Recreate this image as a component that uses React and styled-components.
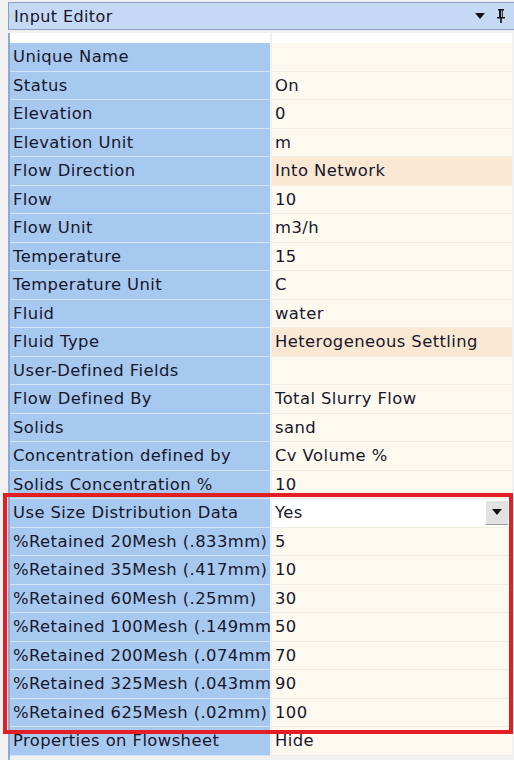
import React from "react";
import styled, { createGlobalStyle } from "styled-components";

const Global = createGlobalStyle`
  html, body { margin: 0; padding: 0; background: #f0f0f0; }
  body { font-family: "DejaVu Sans", Verdana, sans-serif; }
`;

const Page = styled.div`
  width: 514px;
  height: 760px;
  background: #f0f0f0;
  display: flex;
  flex-direction: column;
  position: relative;
  overflow: hidden;
`;

const TitleBar = styled.div`
  margin: 2px 0 0 8px;
  height: 28px;
  box-sizing: border-box;
  border: 1px solid #8c9fba;
  border-right: none;
  background: #c5d9f5;
  display: flex;
  align-items: center;
  padding: 0 8px 0 5px;
  font-size: 16px;
  letter-spacing: 0.4px;
  color: #15152a;
`;

const Title = styled.span`
  flex: 1;
`;

const TitleIcons = styled.div`
  display: flex;
  align-items: center;
  gap: 11px;
`;

const Grid = styled.div`
  margin: 3px 2px 0 8px;
  border-left: 2px solid #8eaad4;
  display: flex;
  flex-direction: column;
  flex: 1;
`;

const Row = styled.div`
  display: grid;
  grid-template-columns: 260px 2px 1fr;
  height: ${(p) => p.$h || "28.5px"};
  flex: none;
`;

const Label = styled.div`
  background: ${(p) => (p.$blank ? "#ffffff" : "#a8c9ef")};
  border-bottom: 1px solid ${(p) => (p.$blank ? "#ffffff" : "#d6e5f7")};
  box-sizing: border-box;
  padding-left: 3px;
  display: flex;
  align-items: center;
  font-size: 16.4px;
  letter-spacing: 0.42px;
  color: #17172c;
  white-space: nowrap;
  overflow: hidden;
`;

const Sep = styled.div`
  background: #eef1f6;
`;

const Value = styled.div`
  background: ${(p) =>
    p.$blank ? "#ffffff" : p.$hl ? "#fbe8d3" : p.$white ? "#ffffff" : "#fef9ef"};
  border-bottom: 1px solid ${(p) => (p.$blank ? "#ffffff" : "#f1ede4")};
  box-sizing: border-box;
  padding-left: 3px;
  display: flex;
  align-items: center;
  font-size: 16.4px;
  letter-spacing: 0.42px;
  color: #17172c;
  white-space: nowrap;
  overflow: hidden;
`;

const ValueText = styled.span`
  flex: 1;
`;

const DropButton = styled.div`
  width: 22px;
  height: 24px;
  margin-right: 4px;
  background: #e2e2e2;
  border-bottom: 1px solid #a0a0a0;
  box-sizing: border-box;
  display: flex;
  align-items: center;
  justify-content: center;
`;

const Highlight = styled.div`
  position: absolute;
  left: 3px;
  top: 493px;
  width: 510px;
  height: 241px;
  box-sizing: border-box;
  border: 4px solid #e31e24;
  pointer-events: none;
`;

const rows = [
  ["Unique Name", ""],
  ["Status", "On"],
  ["Elevation", "0"],
  ["Elevation Unit", "m"],
  ["Flow Direction", "Into Network", "hl"],
  ["Flow", "10"],
  ["Flow Unit", "m3/h"],
  ["Temperature", "15"],
  ["Temperature Unit", "C"],
  ["Fluid", "water"],
  ["Fluid Type", "Heterogeneous Settling", "hl"],
  ["User-Defined Fields", ""],
  ["Flow Defined By", "Total Slurry Flow"],
  ["Solids", "sand"],
  ["Concentration defined by", "Cv Volume %"],
  ["Solids Concentration %", "10"],
  ["Use Size Distribution Data", "Yes", "drop"],
  ["%Retained 20Mesh (.833mm)", "5"],
  ["%Retained 35Mesh (.417mm)", "10"],
  ["%Retained 60Mesh (.25mm)", "30"],
  ["%Retained 100Mesh (.149mm)", "50"],
  ["%Retained 200Mesh (.074mm)", "70"],
  ["%Retained 325Mesh (.043mm)", "90"],
  ["%Retained 625Mesh (.02mm)", "100"],
  ["Properties on Flowsheet", "Hide"],
];

const Caret = () => (
  <svg width="10" height="6" viewBox="0 0 10 6">
    <path d="M0 0H10L5 6Z" fill="#111" />
  </svg>
);

const Pin = () => (
  <svg width="10" height="14" viewBox="0 0 10 14">
    <path d="M2 0H8V1.5H7V8H9V9.5H5.8V14H4.2V9.5H1V8H3V1.5H2Z" fill="#111" />
    <rect x="5.2" y="1.5" width="1" height="6.5" fill="#c5d9f5" />
  </svg>
);

export default function App() {
  return (
    <Page>
      <Global />
      <TitleBar>
        <Title>Input Editor</Title>
        <TitleIcons>
          <Caret />
          <Pin />
        </TitleIcons>
      </TitleBar>
      <Grid>
        <Row $h="10px">
          <Label $blank />
          <Sep />
          <Value $blank />
        </Row>
        {rows.map(([label, value, kind]) => (
          <Row key={label}>
            <Label>{label}</Label>
            <Sep />
            <Value $hl={kind === "hl"} $white={kind === "drop"}>
              <ValueText>{value}</ValueText>
              {kind === "drop" && (
                <DropButton>
                  <Caret />
                </DropButton>
              )}
            </Value>
          </Row>
        ))}
      </Grid>
      <Highlight />
    </Page>
  );
}
